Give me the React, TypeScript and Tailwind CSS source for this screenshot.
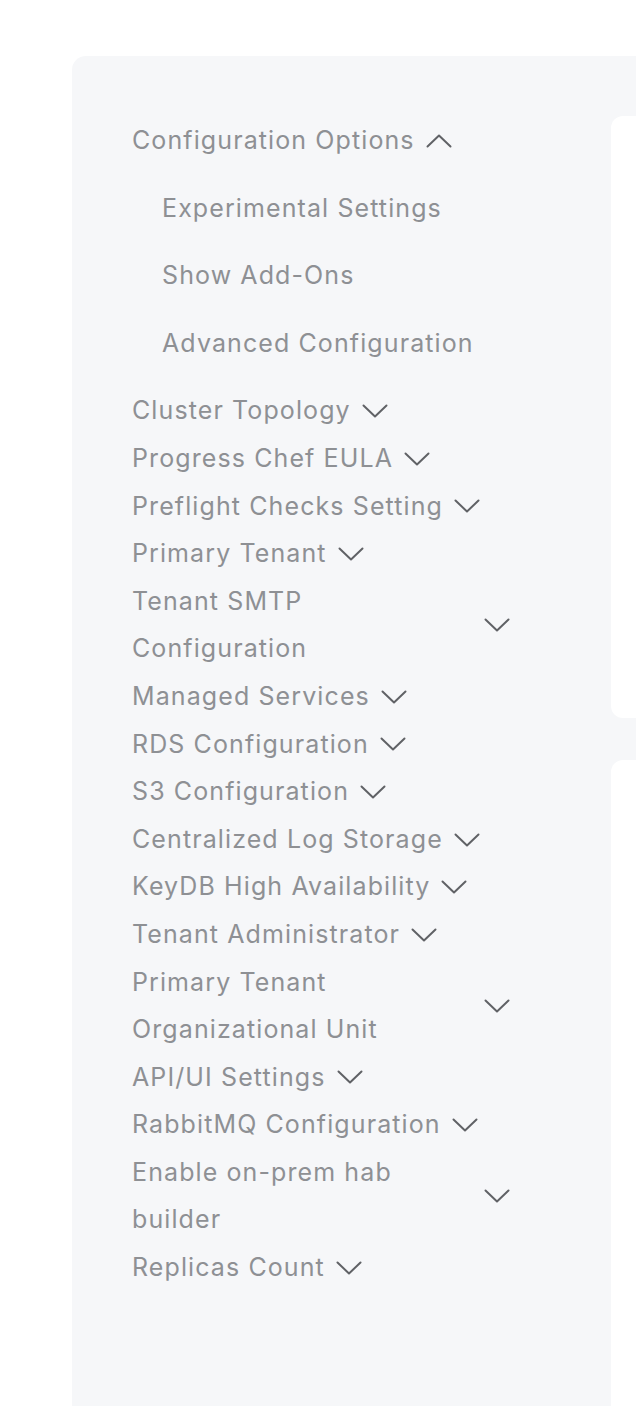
import React from "react";

const sections = [
    "Cluster Topology",
    "Progress Chef EULA",
    "Preflight Checks Setting",
    "Primary Tenant",
    "Tenant SMTP Configuration",
    "Managed Services",
    "RDS Configuration",
    "S3 Configuration",
    "Centralized Log Storage",
    "KeyDB High Availability",
    "Tenant Administrator",
    "Primary Tenant Organizational Unit",
    "API/UI Settings",
    "RabbitMQ Configuration",
    "Enable on-prem hab builder",
    "Replicas Count",
];

const subItems = ["Experimental Settings", "Show Add-Ons", "Advanced Configuration"];

const Chevron = ({ up = false }: { up?: boolean }) => (
    <svg width="26" height="14" viewBox="0 0 26 14" fill="none" className="shrink-0 ml-[11px]">
        <polyline
            points={up ? "1.5,12.5 13,1.5 24.5,12.5" : "1.5,1.5 13,12.5 24.5,1.5"}
            stroke="#606266"
            strokeWidth="2"
            strokeLinecap="round"
            strokeLinejoin="round"
        />
    </svg>
);

export default function App() {
    return (
        <div className="w-full h-[1406px] overflow-hidden bg-white font-['Inter',sans-serif]">
            <div className="ml-[72px] mt-[56px] w-[1200px] bg-[#f6f7f9] rounded-tl-[14px] rounded-tr-[14px] flex p-[60px] pr-0">
                <nav className="w-[479px] shrink-0 pt-[1px] text-[25px] tracking-[1.1px] leading-[47.6px] text-[#8e9094]">
                    <div className="flex items-center">
                        <span>Configuration Options</span>
                        <Chevron up />
                    </div>
                    <div className="flex flex-col gap-[20px] py-[20px] pl-[30px]">
                        {subItems.map(s => (
                            <div key={s}>{s}</div>
                        ))}
                    </div>
                    {sections.map(s => (
                        <div key={s} className="flex items-center">
                            <span className="max-w-[341px]">{s}</span>
                            <Chevron />
                        </div>
                    ))}
                </nav>
                <div className="flex-1 flex flex-col gap-[42px]">
                    <div className="h-[602px] bg-white rounded-[12px]" />
                    <div className="h-[700px] bg-white rounded-[12px]" />
                </div>
            </div>
        </div>
    );
}
